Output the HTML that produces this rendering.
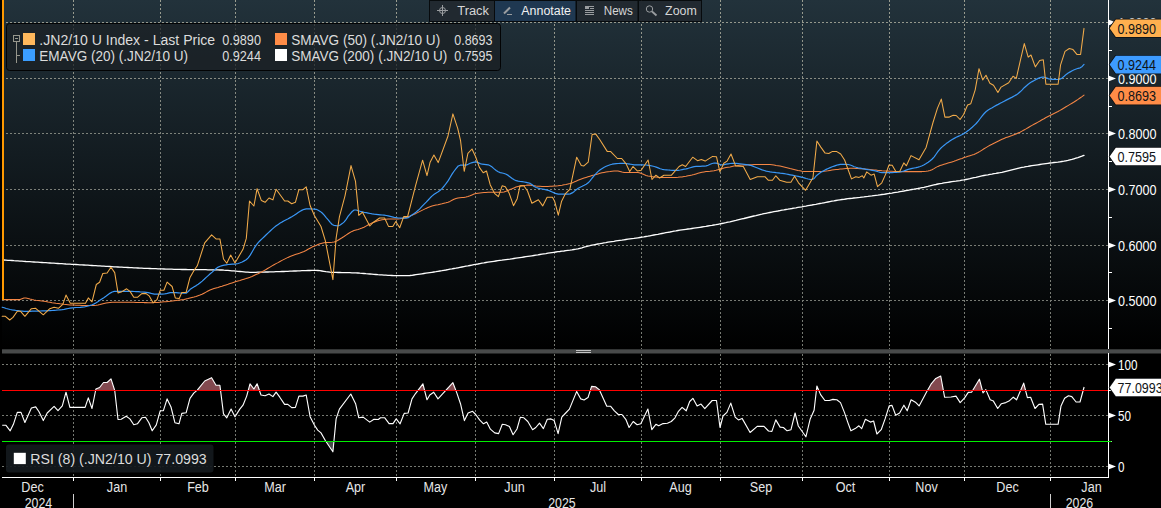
<!DOCTYPE html>
<html lang="en"><head><meta charset="utf-8"><title>.JN2/10 U Index chart</title>
<style>html,body{margin:0;padding:0;background:#000;overflow:hidden}svg{display:block}</style></head>
<body>
<svg width="1161" height="508" viewBox="0 0 1161 508" font-family="Liberation Sans, sans-serif" font-size="14">
<defs><linearGradient id="bg" x1="0" y1="0" x2="0" y2="1"><stop offset="0" stop-color="#22323b"/><stop offset="1" stop-color="#000000"/></linearGradient>
<clipPath id="cUp"><rect x="0" y="354" width="1108" height="36.5"/></clipPath>
<clipPath id="cDn"><rect x="0" y="441.5" width="1108" height="30"/></clipPath>
<linearGradient id="gg" gradientUnits="userSpaceOnUse" x1="0" y1="0" x2="0" y2="508"><stop offset="0" stop-color="#b8b8a6"/><stop offset="0.27" stop-color="#979a90"/><stop offset="1" stop-color="#93988f"/></linearGradient>
</defs>
<rect x="0" y="0" width="1161" height="508" fill="#000"/>
<rect x="2" y="0" width="1159" height="349" fill="url(#bg)"/>
<g stroke="url(#gg)" stroke-width="1" stroke-dasharray="2 2" shape-rendering="crispEdges" fill="none" opacity="0.8">
<path d="M2 22.5 H1108"/>
<path d="M2 78.5 H1108"/>
<path d="M2 133.5 H1108"/>
<path d="M2 189.5 H1108"/>
<path d="M2 245.5 H1108"/>
<path d="M2 300.5 H1108"/>
<path d="M2 364.5 H1108"/>
<path d="M2 415.5 H1108"/>
<path d="M2 466.5 H1108"/>
<path d="M73.5 0 V349"/>
<path d="M73.5 354 V477"/>
<path d="M160.5 0 V349"/>
<path d="M160.5 354 V477"/>
<path d="M235.5 0 V349"/>
<path d="M235.5 354 V477"/>
<path d="M314.5 0 V349"/>
<path d="M314.5 354 V477"/>
<path d="M396.5 0 V349"/>
<path d="M396.5 354 V477"/>
<path d="M475.5 0 V349"/>
<path d="M475.5 354 V477"/>
<path d="M554.5 0 V349"/>
<path d="M554.5 354 V477"/>
<path d="M641.5 0 V349"/>
<path d="M641.5 354 V477"/>
<path d="M720.5 0 V349"/>
<path d="M720.5 354 V477"/>
<path d="M802.5 0 V349"/>
<path d="M802.5 354 V477"/>
<path d="M889.5 0 V349"/>
<path d="M889.5 354 V477"/>
<path d="M964.5 0 V349"/>
<path d="M964.5 354 V477"/>
<path d="M1050.5 0 V349"/>
<path d="M1050.5 354 V477"/>
</g>
<rect x="2" y="349.3" width="1159" height="4.2" fill="#484a4a"/>
<rect x="576" y="350" width="15" height="1" fill="#c4c4c4"/><rect x="576" y="352" width="15" height="1" fill="#c4c4c4"/>
<g stroke="#ffffff" stroke-width="1" shape-rendering="crispEdges">
<path d="M1108.5 0 V349"/><path d="M1108.5 353 V478"/>
<path d="M2 477.5 H1109"/>
<path d="M73.5 478 V481"/>
<path d="M160.5 478 V481"/>
<path d="M235.5 478 V481"/>
<path d="M314.5 478 V481"/>
<path d="M396.5 478 V481"/>
<path d="M475.5 478 V481"/>
<path d="M554.5 478 V481"/>
<path d="M641.5 478 V481"/>
<path d="M720.5 478 V481"/>
<path d="M802.5 478 V481"/>
<path d="M889.5 478 V481"/>
<path d="M964.5 478 V481"/>
<path d="M1050.5 478 V481"/>
<path d="M73.5 494 V508" stroke="#cfcfcf"/><path d="M1050.5 494 V508" stroke="#cfcfcf"/>
<path d="M1109 50.5 H1112"/>
<path d="M1109 106.5 H1112"/>
<path d="M1109 161.5 H1112"/>
<path d="M1109 217.5 H1112"/>
<path d="M1109 272.5 H1112"/>
<path d="M1109 328.5 H1112"/>
<path d="M1109 390.5 H1112"/>
<path d="M1109 441.5 H1112"/>
</g>
<g fill="#ffffff">
<path d="M1109 19.7 L1116 22.5 L1109 25.3 Z"/>
<text x="1118" y="28.0" font-size="14" textLength="38.5" lengthAdjust="spacingAndGlyphs">1.0000</text>
<path d="M1109 75.7 L1116 78.5 L1109 81.3 Z"/>
<text x="1118" y="84.0" font-size="14" textLength="38.5" lengthAdjust="spacingAndGlyphs">0.9000</text>
<path d="M1109 130.7 L1116 133.5 L1109 136.3 Z"/>
<text x="1118" y="139.0" font-size="14" textLength="38.5" lengthAdjust="spacingAndGlyphs">0.8000</text>
<path d="M1109 186.7 L1116 189.5 L1109 192.3 Z"/>
<text x="1118" y="195.0" font-size="14" textLength="38.5" lengthAdjust="spacingAndGlyphs">0.7000</text>
<path d="M1109 242.7 L1116 245.5 L1109 248.3 Z"/>
<text x="1118" y="251.0" font-size="14" textLength="38.5" lengthAdjust="spacingAndGlyphs">0.6000</text>
<path d="M1109 297.7 L1116 300.5 L1109 303.3 Z"/>
<text x="1118" y="306.0" font-size="14" textLength="38.5" lengthAdjust="spacingAndGlyphs">0.5000</text>
<path d="M1109 361.7 L1116 364.5 L1109 367.3 Z"/>
<text x="1118" y="370.0" font-size="14" textLength="19.5" lengthAdjust="spacingAndGlyphs">100</text>
<path d="M1109 412.7 L1116 415.5 L1109 418.3 Z"/>
<text x="1118" y="421.0" font-size="14" textLength="13" lengthAdjust="spacingAndGlyphs">50</text>
<path d="M1109 463.7 L1116 466.5 L1109 469.3 Z"/>
<text x="1118" y="472.0" font-size="14" textLength="6.5" lengthAdjust="spacingAndGlyphs">0</text>
</g>
<g fill="none" stroke-linejoin="round" stroke-linecap="round">
<path d="M3.9 260.0 L5.9 260.1 L7.9 260.3 L9.9 260.4 L11.9 260.5 L13.9 260.7 L15.9 260.8 L17.9 260.9 L19.9 261.1 L21.9 261.2 L23.9 261.3 L25.9 261.5 L27.9 261.6 L29.9 261.7 L31.9 261.9 L33.9 262.0 L35.9 262.1 L37.9 262.2 L39.9 262.4 L41.9 262.5 L43.9 262.6 L45.9 262.7 L47.9 262.9 L49.9 263.0 L51.9 263.1 L53.9 263.2 L55.9 263.4 L57.9 263.5 L59.9 263.6 L61.9 263.7 L63.9 263.8 L65.9 264.0 L67.9 264.1 L69.9 264.2 L71.9 264.3 L73.9 264.4 L75.9 264.5 L77.9 264.6 L79.9 264.8 L81.9 264.9 L83.9 265.0 L85.9 265.1 L87.9 265.2 L89.9 265.4 L91.9 265.5 L93.9 265.6 L95.9 265.7 L97.9 265.8 L99.9 265.9 L101.9 266.1 L103.9 266.2 L105.9 266.3 L107.9 266.4 L109.9 266.5 L111.9 266.6 L113.9 266.8 L115.9 266.9 L117.9 267.0 L119.9 267.1 L121.9 267.2 L123.9 267.3 L125.9 267.4 L127.9 267.5 L129.9 267.6 L131.9 267.7 L133.9 267.8 L135.9 267.9 L137.9 268.0 L139.9 268.1 L141.9 268.2 L143.9 268.3 L145.9 268.4 L147.9 268.4 L149.9 268.5 L151.9 268.6 L153.9 268.7 L155.9 268.7 L157.9 268.8 L159.9 268.9 L161.9 268.9 L163.9 269.0 L165.9 269.1 L167.9 269.1 L169.9 269.2 L171.9 269.2 L173.9 269.3 L175.9 269.3 L177.9 269.4 L179.9 269.4 L181.9 269.5 L183.9 269.5 L185.9 269.5 L187.9 269.6 L189.9 269.6 L191.9 269.6 L193.9 269.6 L195.9 269.7 L197.9 269.7 L199.9 269.7 L201.9 269.7 L203.9 269.7 L205.9 269.7 L207.9 269.8 L209.9 269.8 L211.9 269.8 L213.9 269.8 L215.9 269.9 L217.9 269.9 L219.9 270.0 L221.9 270.0 L223.9 270.2 L225.9 270.3 L227.9 270.4 L229.9 270.6 L231.9 270.8 L233.9 270.9 L235.9 271.1 L237.9 271.3 L239.9 271.5 L241.9 271.7 L243.9 271.9 L245.9 272.1 L247.9 272.2 L249.9 272.3 L251.9 272.3 L253.9 272.3 L255.9 272.3 L257.9 272.2 L259.9 272.2 L261.9 272.1 L263.9 272.1 L265.9 272.0 L267.9 272.0 L269.9 271.9 L271.9 271.8 L273.9 271.8 L275.9 271.7 L277.9 271.7 L279.9 271.6 L281.9 271.5 L283.9 271.5 L285.9 271.4 L287.9 271.3 L289.9 271.2 L291.9 271.1 L293.9 271.0 L295.9 271.0 L297.9 270.9 L299.9 270.8 L301.9 270.7 L303.9 270.6 L305.9 270.6 L307.9 270.5 L309.9 270.5 L311.9 270.4 L313.9 270.4 L315.9 270.4 L317.9 270.5 L319.9 270.7 L321.9 271.0 L323.9 271.3 L325.9 271.6 L327.9 271.8 L329.9 272.1 L331.9 272.3 L333.9 272.3 L335.9 272.4 L337.9 272.5 L339.9 272.5 L341.9 272.6 L343.9 272.6 L345.9 272.6 L347.9 272.7 L349.9 272.7 L351.9 272.8 L353.9 272.8 L355.9 272.9 L357.9 273.0 L359.9 273.2 L361.9 273.3 L363.9 273.5 L365.9 273.7 L367.9 273.8 L369.9 274.0 L371.9 274.2 L373.9 274.4 L375.9 274.5 L377.9 274.7 L379.9 274.8 L381.9 274.9 L383.9 275.1 L385.9 275.2 L387.9 275.3 L389.9 275.4 L391.9 275.5 L393.9 275.6 L395.9 275.6 L397.9 275.6 L399.9 275.6 L401.9 275.6 L403.9 275.6 L405.9 275.6 L407.9 275.6 L409.9 275.5 L411.9 275.3 L413.9 275.0 L415.9 274.7 L417.9 274.4 L419.9 274.1 L421.9 273.8 L423.9 273.5 L425.9 273.2 L427.9 272.9 L429.9 272.6 L431.9 272.3 L433.9 272.0 L435.9 271.7 L437.9 271.3 L439.9 271.0 L441.9 270.7 L443.9 270.3 L445.9 270.0 L447.9 269.6 L449.9 269.2 L451.9 268.9 L453.9 268.5 L455.9 268.2 L457.9 267.8 L459.9 267.4 L461.9 267.0 L463.9 266.6 L465.9 266.2 L467.9 265.9 L469.9 265.5 L471.9 265.1 L473.9 264.7 L475.9 264.3 L477.9 264.0 L479.9 263.6 L481.9 263.2 L483.9 262.9 L485.9 262.5 L487.9 262.2 L489.9 261.9 L491.9 261.6 L493.9 261.3 L495.9 261.0 L497.9 260.7 L499.9 260.4 L501.9 260.2 L503.9 259.9 L505.9 259.6 L507.9 259.3 L509.9 259.1 L511.9 258.8 L513.9 258.5 L515.9 258.2 L517.9 257.9 L519.9 257.6 L521.9 257.3 L523.9 257.0 L525.9 256.7 L527.9 256.4 L529.9 256.1 L531.9 255.8 L533.9 255.5 L535.9 255.2 L537.9 254.9 L539.9 254.5 L541.9 254.2 L543.9 253.9 L545.9 253.6 L547.9 253.2 L549.9 252.9 L551.9 252.6 L553.9 252.3 L555.9 252.0 L557.9 251.7 L559.9 251.5 L561.9 251.2 L563.9 251.0 L565.9 250.7 L567.9 250.4 L569.9 250.2 L571.9 249.9 L573.9 249.5 L575.9 249.2 L577.9 248.8 L579.9 248.3 L581.9 247.8 L583.9 247.2 L585.9 246.7 L587.9 246.1 L589.9 245.7 L591.9 245.2 L593.9 244.8 L595.9 244.4 L597.9 244.0 L599.9 243.7 L601.9 243.3 L603.9 242.9 L605.9 242.6 L607.9 242.2 L609.9 241.9 L611.9 241.6 L613.9 241.3 L615.9 240.9 L617.9 240.6 L619.9 240.3 L621.9 240.1 L623.9 239.8 L625.9 239.5 L627.9 239.2 L629.9 238.9 L631.9 238.6 L633.9 238.4 L635.9 238.1 L637.9 237.8 L639.9 237.5 L641.9 237.2 L643.9 236.9 L645.9 236.5 L647.9 236.2 L649.9 235.8 L651.9 235.4 L653.9 235.0 L655.9 234.6 L657.9 234.3 L659.9 233.9 L661.9 233.5 L663.9 233.1 L665.9 232.7 L667.9 232.3 L669.9 232.0 L671.9 231.6 L673.9 231.2 L675.9 230.9 L677.9 230.5 L679.9 230.2 L681.9 229.9 L683.9 229.6 L685.9 229.3 L687.9 229.0 L689.9 228.8 L691.9 228.5 L693.9 228.2 L695.9 227.9 L697.9 227.6 L699.9 227.3 L701.9 227.0 L703.9 226.7 L705.9 226.4 L707.9 226.0 L709.9 225.7 L711.9 225.4 L713.9 225.0 L715.9 224.7 L717.9 224.3 L719.9 223.9 L721.9 223.5 L723.9 223.1 L725.9 222.7 L727.9 222.2 L729.9 221.8 L731.9 221.3 L733.9 220.8 L735.9 220.4 L737.9 219.9 L739.9 219.4 L741.9 218.9 L743.9 218.5 L745.9 218.0 L747.9 217.5 L749.9 217.0 L751.9 216.5 L753.9 216.0 L755.9 215.6 L757.9 215.1 L759.9 214.6 L761.9 214.2 L763.9 213.7 L765.9 213.3 L767.9 212.9 L769.9 212.5 L771.9 212.1 L773.9 211.7 L775.9 211.3 L777.9 211.0 L779.9 210.6 L781.9 210.2 L783.9 209.9 L785.9 209.5 L787.9 209.2 L789.9 208.8 L791.9 208.5 L793.9 208.1 L795.9 207.8 L797.9 207.4 L799.9 207.1 L801.9 206.8 L803.9 206.4 L805.9 206.1 L807.9 205.7 L809.9 205.3 L811.9 205.0 L813.9 204.6 L815.9 204.3 L817.9 203.9 L819.9 203.5 L821.9 203.2 L823.9 202.8 L825.9 202.4 L827.9 202.0 L829.9 201.6 L831.9 201.2 L833.9 200.9 L835.9 200.5 L837.9 200.1 L839.9 199.8 L841.9 199.5 L843.9 199.3 L845.9 199.0 L847.9 198.7 L849.9 198.5 L851.9 198.3 L853.9 198.0 L855.9 197.8 L857.9 197.6 L859.9 197.4 L861.9 197.1 L863.9 196.9 L865.9 196.6 L867.9 196.4 L869.9 196.1 L871.9 195.9 L873.9 195.6 L875.9 195.3 L877.9 195.1 L879.9 194.8 L881.9 194.5 L883.9 194.3 L885.9 194.0 L887.9 193.7 L889.9 193.4 L891.9 193.1 L893.9 192.7 L895.9 192.4 L897.9 192.1 L899.9 191.7 L901.9 191.3 L903.9 191.0 L905.9 190.6 L907.9 190.3 L909.9 189.9 L911.9 189.5 L913.9 189.2 L915.9 188.8 L917.9 188.5 L919.9 188.1 L921.9 187.7 L923.9 187.3 L925.9 186.8 L927.9 186.4 L929.9 185.9 L931.9 185.4 L933.9 184.9 L935.9 184.5 L937.9 184.0 L939.9 183.6 L941.9 183.3 L943.9 182.9 L945.9 182.6 L947.9 182.3 L949.9 182.0 L951.9 181.7 L953.9 181.4 L955.9 181.2 L957.9 180.9 L959.9 180.6 L961.9 180.2 L963.9 179.9 L965.9 179.5 L967.9 179.1 L969.9 178.7 L971.9 178.2 L973.9 177.7 L975.9 177.3 L977.9 176.8 L979.9 176.3 L981.9 175.9 L983.9 175.5 L985.9 175.1 L987.9 174.8 L989.9 174.4 L991.9 174.1 L993.9 173.7 L995.9 173.4 L997.9 173.0 L999.9 172.7 L1001.9 172.3 L1003.9 171.8 L1005.9 171.3 L1007.9 170.8 L1009.9 170.3 L1011.9 169.8 L1013.9 169.3 L1015.9 168.8 L1017.9 168.3 L1019.9 167.8 L1021.9 167.4 L1023.9 167.1 L1025.9 166.7 L1027.9 166.4 L1029.9 166.0 L1031.9 165.7 L1033.9 165.4 L1035.9 165.1 L1037.9 164.8 L1039.9 164.5 L1041.9 164.2 L1043.9 163.9 L1045.9 163.6 L1047.9 163.3 L1049.9 163.0 L1051.9 162.8 L1053.9 162.5 L1055.9 162.3 L1057.9 162.1 L1059.9 161.8 L1061.9 161.5 L1063.9 161.2 L1065.9 160.8 L1067.9 160.4 L1069.9 159.9 L1071.9 159.4 L1073.9 158.8 L1075.9 158.2 L1077.9 157.6 L1079.9 156.9 L1081.9 156.2 L1083.9 155.4 L1084.0 155.4" stroke="#ffffff" stroke-width="1.3"/>
<path d="M4.0 299.6 L6.0 299.6 L8.0 299.6 L10.0 299.6 L12.0 299.6 L14.0 299.6 L16.0 299.6 L18.0 299.6 L20.0 299.6 L22.0 298.8 L24.0 298.0 L26.0 298.0 L28.0 298.4 L30.0 299.0 L32.0 299.5 L34.0 299.9 L36.0 300.2 L38.0 300.4 L40.0 300.7 L42.0 301.0 L44.0 301.3 L46.0 301.6 L48.0 302.0 L50.0 302.3 L52.0 302.7 L54.0 303.0 L56.0 303.3 L58.0 303.5 L60.0 303.8 L62.0 304.0 L64.0 304.3 L66.0 304.5 L68.0 304.7 L70.0 304.9 L72.0 305.0 L74.0 305.1 L76.0 305.2 L78.0 305.2 L80.0 305.3 L82.0 305.4 L84.0 305.4 L86.0 305.4 L88.0 305.5 L90.0 305.5 L92.0 305.5 L94.0 305.5 L96.0 305.3 L98.0 305.0 L100.0 304.6 L102.0 304.1 L104.0 303.6 L106.0 303.1 L108.0 302.7 L110.0 302.4 L112.0 302.3 L114.0 302.3 L116.0 302.3 L118.0 302.3 L120.0 302.3 L122.0 302.3 L124.0 302.3 L126.0 302.3 L128.0 302.3 L130.0 302.3 L132.0 302.3 L134.0 302.3 L136.0 302.4 L138.0 302.4 L140.0 302.5 L142.0 302.5 L144.0 302.6 L146.0 302.6 L148.0 302.7 L150.0 302.7 L152.0 302.7 L154.0 302.6 L156.0 302.5 L158.0 302.4 L160.0 302.2 L162.0 302.0 L164.0 301.8 L166.0 301.7 L168.0 301.5 L170.0 301.3 L172.0 301.0 L174.0 300.8 L176.0 300.6 L178.0 300.3 L180.0 300.0 L182.0 299.7 L184.0 299.4 L186.0 299.0 L188.0 298.6 L190.0 298.1 L192.0 297.6 L194.0 297.1 L196.0 296.5 L198.0 295.8 L200.0 295.1 L202.0 294.3 L204.0 293.2 L206.0 292.1 L208.0 291.0 L210.0 290.0 L212.0 289.2 L214.0 288.5 L216.0 287.9 L218.0 287.4 L220.0 286.8 L222.0 286.3 L224.0 285.6 L226.0 284.9 L228.0 284.3 L230.0 283.6 L232.0 282.9 L234.0 282.2 L236.0 281.5 L238.0 280.9 L240.0 280.4 L242.0 279.8 L244.0 279.2 L246.0 278.6 L248.0 277.9 L250.0 277.2 L252.0 276.4 L254.0 275.5 L256.0 274.6 L258.0 273.7 L260.0 272.7 L262.0 271.7 L264.0 270.6 L266.0 269.5 L268.0 268.3 L270.0 267.1 L272.0 265.9 L274.0 264.7 L276.0 263.6 L278.0 262.6 L280.0 261.5 L282.0 260.4 L284.0 259.4 L286.0 258.4 L288.0 257.4 L290.0 256.5 L292.0 255.7 L294.0 255.0 L296.0 254.3 L298.0 253.7 L300.0 253.1 L302.0 252.3 L304.0 251.5 L306.0 250.5 L308.0 249.3 L310.0 248.2 L312.0 247.1 L314.0 246.2 L316.0 245.4 L318.0 244.6 L320.0 243.8 L322.0 243.2 L324.0 242.8 L326.0 242.6 L328.0 242.5 L330.0 242.4 L332.0 242.3 L334.0 242.1 L336.0 241.4 L338.0 240.2 L340.0 239.0 L342.0 237.8 L344.0 236.5 L346.0 235.1 L348.0 233.7 L350.0 232.5 L352.0 231.4 L354.0 230.5 L356.0 229.9 L358.0 229.4 L360.0 228.8 L362.0 228.1 L364.0 227.2 L366.0 226.1 L368.0 225.0 L370.0 224.0 L372.0 223.1 L374.0 222.2 L376.0 221.4 L378.0 220.8 L380.0 220.3 L382.0 219.8 L384.0 219.4 L386.0 219.2 L388.0 219.1 L390.0 219.0 L392.0 219.0 L394.0 219.0 L396.0 219.0 L398.0 218.9 L400.0 218.8 L402.0 218.5 L404.0 218.0 L406.0 217.4 L408.0 216.8 L410.0 216.1 L412.0 215.3 L414.0 214.3 L416.0 213.4 L418.0 212.4 L420.0 211.4 L422.0 210.4 L424.0 209.4 L426.0 208.4 L428.0 207.5 L430.0 206.8 L432.0 206.1 L434.0 205.6 L436.0 205.1 L438.0 204.7 L440.0 204.2 L442.0 203.8 L444.0 203.3 L446.0 202.8 L448.0 202.2 L450.0 201.4 L452.0 200.3 L454.0 199.3 L456.0 198.4 L458.0 197.9 L460.0 197.7 L462.0 197.5 L464.0 197.4 L466.0 197.1 L468.0 196.5 L470.0 195.8 L472.0 194.9 L474.0 194.1 L476.0 193.5 L478.0 193.2 L480.0 193.0 L482.0 192.8 L484.0 192.6 L486.0 192.4 L488.0 192.3 L490.0 192.3 L492.0 192.3 L494.0 192.3 L496.0 192.3 L498.0 192.3 L500.0 192.3 L502.0 192.3 L504.0 192.0 L506.0 191.3 L508.0 190.4 L510.0 189.6 L512.0 188.8 L514.0 187.9 L516.0 187.1 L518.0 186.4 L520.0 185.9 L522.0 185.6 L524.0 185.4 L526.0 185.3 L528.0 185.1 L530.0 185.1 L532.0 185.4 L534.0 185.7 L536.0 186.0 L538.0 186.2 L540.0 186.3 L542.0 186.5 L544.0 186.5 L546.0 186.5 L548.0 186.4 L550.0 186.3 L552.0 186.2 L554.0 186.0 L556.0 185.9 L558.0 185.7 L560.0 185.4 L562.0 185.2 L564.0 184.8 L566.0 184.5 L568.0 184.0 L570.0 183.6 L572.0 182.9 L574.0 182.1 L576.0 181.2 L578.0 180.3 L580.0 179.5 L582.0 178.7 L584.0 178.0 L586.0 177.4 L588.0 176.8 L590.0 176.2 L592.0 175.6 L594.0 175.1 L596.0 174.5 L598.0 173.9 L600.0 173.3 L602.0 172.8 L604.0 172.4 L606.0 172.0 L608.0 171.7 L610.0 171.5 L612.0 171.2 L614.0 171.0 L616.0 170.9 L618.0 170.9 L620.0 171.4 L622.0 172.1 L624.0 172.4 L626.0 172.4 L628.0 172.4 L630.0 172.4 L632.0 172.4 L634.0 172.4 L636.0 172.4 L638.0 172.5 L640.0 173.0 L642.0 173.7 L644.0 174.6 L646.0 175.4 L648.0 175.9 L650.0 176.2 L652.0 176.6 L654.0 176.9 L656.0 177.1 L658.0 177.3 L660.0 177.4 L662.0 177.4 L664.0 177.4 L666.0 177.4 L668.0 177.4 L670.0 177.4 L672.0 177.4 L674.0 177.4 L676.0 177.4 L678.0 177.3 L680.0 177.1 L682.0 176.9 L684.0 176.5 L686.0 176.2 L688.0 175.8 L690.0 175.4 L692.0 175.0 L694.0 174.5 L696.0 173.9 L698.0 173.3 L700.0 172.8 L702.0 172.3 L704.0 171.9 L706.0 171.6 L708.0 171.4 L710.0 171.3 L712.0 171.0 L714.0 170.7 L716.0 170.3 L718.0 169.8 L720.0 169.3 L722.0 168.7 L724.0 168.1 L726.0 167.6 L728.0 167.2 L730.0 166.9 L732.0 166.5 L734.0 166.1 L736.0 165.8 L738.0 165.5 L740.0 165.3 L742.0 165.1 L744.0 165.0 L746.0 164.9 L748.0 164.8 L750.0 164.7 L752.0 164.7 L754.0 164.6 L756.0 164.5 L758.0 164.5 L760.0 164.5 L762.0 164.4 L764.0 164.4 L766.0 164.4 L768.0 164.4 L770.0 164.5 L772.0 164.7 L774.0 165.0 L776.0 165.4 L778.0 165.7 L780.0 166.1 L782.0 166.5 L784.0 167.0 L786.0 167.5 L788.0 168.0 L790.0 168.5 L792.0 168.9 L794.0 169.4 L796.0 169.9 L798.0 170.4 L800.0 170.8 L802.0 171.2 L804.0 171.4 L806.0 171.5 L808.0 171.5 L810.0 171.5 L812.0 171.5 L814.0 171.5 L816.0 171.5 L818.0 171.5 L820.0 171.5 L822.0 171.5 L824.0 171.3 L826.0 171.1 L828.0 170.8 L830.0 170.4 L832.0 170.1 L834.0 169.8 L836.0 169.6 L838.0 169.4 L840.0 169.1 L842.0 168.9 L844.0 168.7 L846.0 168.5 L848.0 168.4 L850.0 168.3 L852.0 168.3 L854.0 168.3 L856.0 168.4 L858.0 168.5 L860.0 168.7 L862.0 168.8 L864.0 169.0 L866.0 169.2 L868.0 169.3 L870.0 169.5 L872.0 169.7 L874.0 169.9 L876.0 170.1 L878.0 170.4 L880.0 170.6 L882.0 170.8 L884.0 170.9 L886.0 171.0 L888.0 171.1 L890.0 171.2 L892.0 171.3 L894.0 171.4 L896.0 171.5 L898.0 171.6 L900.0 171.6 L902.0 171.6 L904.0 171.6 L906.0 171.6 L908.0 171.6 L910.0 171.6 L912.0 171.6 L914.0 171.6 L916.0 171.6 L918.0 171.6 L920.0 171.6 L922.0 171.6 L924.0 171.4 L926.0 171.2 L928.0 170.9 L930.0 170.5 L932.0 169.7 L934.0 168.6 L936.0 167.4 L938.0 166.4 L940.0 165.6 L942.0 164.9 L944.0 164.3 L946.0 163.7 L948.0 163.1 L950.0 162.5 L952.0 161.9 L954.0 161.3 L956.0 160.6 L958.0 159.8 L960.0 159.1 L962.0 158.4 L964.0 157.6 L966.0 157.0 L968.0 156.3 L970.0 155.7 L972.0 155.1 L974.0 154.4 L976.0 153.5 L978.0 152.5 L980.0 151.4 L982.0 150.1 L984.0 148.8 L986.0 147.6 L988.0 146.4 L990.0 145.3 L992.0 144.3 L994.0 143.2 L996.0 142.2 L998.0 141.2 L1000.0 140.2 L1002.0 139.3 L1004.0 138.4 L1006.0 137.6 L1008.0 136.9 L1010.0 136.2 L1012.0 135.5 L1014.0 134.7 L1016.0 134.0 L1018.0 133.1 L1020.0 132.2 L1022.0 131.1 L1024.0 130.0 L1026.0 128.9 L1028.0 127.7 L1030.0 126.5 L1032.0 125.4 L1034.0 124.3 L1036.0 123.2 L1038.0 122.1 L1040.0 121.0 L1042.0 119.8 L1044.0 118.7 L1046.0 117.5 L1048.0 116.5 L1050.0 115.5 L1052.0 114.5 L1054.0 113.5 L1056.0 112.5 L1058.0 111.5 L1060.0 110.4 L1062.0 109.2 L1064.0 108.0 L1066.0 106.8 L1068.0 105.6 L1070.0 104.4 L1072.0 103.2 L1074.0 102.0 L1076.0 100.7 L1078.0 99.4 L1080.0 98.0 L1082.0 96.6 L1084.0 95.1" stroke="#f58645" stroke-width="1.05"/>
<path d="M2.2 307.2 L4.2 307.8 L6.2 308.5 L8.2 309.0 L10.2 309.5 L12.2 309.9 L14.2 310.2 L16.2 310.5 L18.2 310.7 L20.2 311.0 L22.2 311.1 L24.2 311.3 L26.2 311.3 L28.2 311.3 L30.2 311.3 L32.2 311.2 L34.2 311.2 L36.2 311.1 L38.2 311.1 L40.2 311.0 L42.2 310.9 L44.2 310.9 L46.2 310.8 L48.2 310.7 L50.2 310.6 L52.2 310.5 L54.2 310.3 L56.2 310.2 L58.2 310.0 L60.2 309.8 L62.2 309.6 L64.2 309.3 L66.2 308.9 L68.2 308.5 L70.2 308.1 L72.2 307.8 L74.2 307.7 L76.2 307.5 L78.2 307.5 L80.2 307.4 L82.2 307.2 L84.2 307.0 L86.2 306.5 L88.2 306.0 L90.2 305.4 L92.2 304.7 L94.2 303.9 L96.2 302.8 L98.2 301.5 L100.2 300.1 L102.2 298.7 L104.2 297.4 L106.2 296.0 L108.2 294.5 L110.2 293.1 L112.2 292.0 L114.2 291.4 L116.2 291.4 L118.2 291.4 L120.2 291.4 L122.2 291.4 L124.2 291.4 L126.2 291.4 L128.2 291.4 L130.2 291.4 L132.2 291.4 L134.2 291.5 L136.2 291.6 L138.2 291.7 L140.2 291.9 L142.2 292.0 L144.2 292.2 L146.2 292.4 L148.2 292.7 L150.2 293.1 L152.2 293.7 L154.2 294.1 L156.2 294.2 L158.2 294.2 L160.2 294.1 L162.2 294.1 L164.2 294.0 L166.2 293.7 L168.2 293.1 L170.2 292.6 L172.2 292.5 L174.2 292.6 L176.2 292.7 L178.2 292.8 L180.2 293.0 L182.2 293.1 L184.2 293.2 L186.2 293.2 L188.2 291.5 L190.2 289.3 L192.2 288.0 L194.2 286.7 L196.2 285.6 L198.2 284.3 L200.2 282.7 L202.2 281.1 L204.2 279.3 L206.2 277.4 L208.2 275.6 L210.2 273.8 L212.2 272.1 L214.2 270.3 L216.2 268.5 L218.2 267.1 L220.2 266.3 L222.2 265.6 L224.2 265.2 L226.2 264.8 L228.2 264.5 L230.2 264.3 L232.2 264.2 L234.2 264.1 L236.2 263.9 L238.2 263.5 L240.2 262.8 L242.2 262.0 L244.2 260.9 L246.2 259.8 L248.2 257.9 L250.2 255.1 L252.2 251.7 L254.2 248.2 L256.2 245.1 L258.2 242.6 L260.2 240.5 L262.2 238.6 L264.2 236.7 L266.2 234.8 L268.2 232.9 L270.2 231.0 L272.2 229.1 L274.2 227.4 L276.2 225.8 L278.2 224.4 L280.2 223.1 L282.2 221.9 L284.2 220.8 L286.2 219.7 L288.2 218.7 L290.2 217.6 L292.2 216.5 L294.2 215.3 L296.2 213.9 L298.2 212.5 L300.2 211.2 L302.2 210.1 L304.2 209.3 L306.2 208.8 L308.2 208.8 L310.2 208.9 L312.2 209.0 L314.2 209.1 L316.2 209.3 L318.2 210.2 L320.2 211.4 L322.2 213.0 L324.2 215.1 L326.2 217.6 L328.2 219.8 L330.2 222.3 L332.2 224.5 L334.2 225.5 L336.2 225.7 L338.2 225.8 L340.2 225.0 L342.2 223.6 L344.2 221.9 L346.2 219.3 L348.2 216.2 L350.2 213.8 L352.2 211.5 L354.2 210.0 L356.2 210.0 L358.2 210.7 L360.2 211.3 L362.2 211.8 L364.2 212.3 L366.2 212.7 L368.2 213.1 L370.2 213.5 L372.2 213.9 L374.2 214.2 L376.2 214.4 L378.2 214.6 L380.2 214.8 L382.2 215.0 L384.2 215.2 L386.2 215.5 L388.2 215.8 L390.2 216.3 L392.2 216.8 L394.2 217.3 L396.2 217.7 L398.2 218.0 L400.2 218.0 L402.2 218.1 L404.2 218.1 L406.2 218.1 L408.2 217.7 L410.2 216.3 L412.2 214.8 L414.2 213.5 L416.2 212.0 L418.2 210.3 L420.2 208.3 L422.2 206.2 L424.2 204.1 L426.2 202.1 L428.2 200.0 L430.2 197.8 L432.2 195.9 L434.2 194.2 L436.2 192.9 L438.2 191.7 L440.2 190.3 L442.2 188.4 L444.2 186.0 L446.2 183.4 L448.2 180.6 L450.2 177.3 L452.2 173.9 L454.2 171.0 L456.2 168.4 L458.2 166.0 L460.2 165.2 L462.2 165.2 L464.2 165.2 L466.2 165.1 L468.2 164.2 L470.2 163.2 L472.2 162.6 L474.2 162.1 L476.2 161.9 L478.2 162.6 L480.2 163.6 L482.2 164.2 L484.2 164.4 L486.2 164.6 L488.2 164.8 L490.2 165.7 L492.2 167.1 L494.2 168.9 L496.2 170.5 L498.2 171.8 L500.2 172.6 L502.2 173.0 L504.2 173.5 L506.2 174.3 L508.2 175.4 L510.2 176.9 L512.2 178.4 L514.2 179.7 L516.2 180.7 L518.2 181.2 L520.2 181.5 L522.2 181.7 L524.2 182.0 L526.2 182.4 L528.2 182.8 L530.2 183.4 L532.2 184.8 L534.2 186.5 L536.2 187.5 L538.2 188.1 L540.2 188.6 L542.2 189.0 L544.2 189.4 L546.2 189.8 L548.2 190.3 L550.2 191.1 L552.2 192.0 L554.2 192.9 L556.2 193.7 L558.2 194.2 L560.2 194.2 L562.2 194.2 L564.2 194.2 L566.2 194.2 L568.2 194.2 L570.2 193.9 L572.2 192.9 L574.2 191.4 L576.2 189.8 L578.2 188.3 L580.2 187.2 L582.2 186.3 L584.2 185.3 L586.2 184.2 L588.2 182.8 L590.2 180.7 L592.2 178.0 L594.2 175.6 L596.2 173.4 L598.2 171.4 L600.2 169.7 L602.2 168.4 L604.2 167.2 L606.2 166.3 L608.2 165.5 L610.2 164.8 L612.2 164.2 L614.2 163.8 L616.2 163.6 L618.2 163.5 L620.2 163.4 L622.2 163.3 L624.2 163.3 L626.2 163.5 L628.2 163.8 L630.2 164.2 L632.2 164.5 L634.2 164.8 L636.2 164.8 L638.2 164.9 L640.2 164.9 L642.2 164.9 L644.2 165.0 L646.2 165.0 L648.2 165.3 L650.2 165.6 L652.2 166.0 L654.2 166.5 L656.2 167.1 L658.2 167.9 L660.2 168.7 L662.2 169.3 L664.2 169.6 L666.2 169.8 L668.2 170.0 L670.2 170.2 L672.2 170.3 L674.2 170.4 L676.2 170.4 L678.2 170.3 L680.2 170.0 L682.2 169.6 L684.2 169.2 L686.2 168.8 L688.2 168.3 L690.2 167.7 L692.2 167.1 L694.2 166.6 L696.2 166.4 L698.2 166.4 L700.2 166.3 L702.2 166.2 L704.2 166.2 L706.2 165.9 L708.2 165.2 L710.2 164.3 L712.2 163.5 L714.2 163.0 L716.2 163.1 L718.2 163.8 L720.2 164.6 L722.2 164.8 L724.2 164.6 L726.2 164.2 L728.2 163.8 L730.2 163.5 L732.2 163.3 L734.2 163.3 L736.2 163.4 L738.2 163.6 L740.2 163.8 L742.2 164.0 L744.2 164.3 L746.2 164.6 L748.2 164.9 L750.2 165.3 L752.2 165.9 L754.2 166.7 L756.2 167.5 L758.2 168.3 L760.2 169.1 L762.2 169.9 L764.2 170.5 L766.2 171.1 L768.2 171.5 L770.2 171.9 L772.2 172.2 L774.2 172.4 L776.2 172.7 L778.2 172.9 L780.2 173.2 L782.2 173.4 L784.2 173.7 L786.2 174.0 L788.2 174.4 L790.2 174.8 L792.2 175.2 L794.2 175.6 L796.2 176.0 L798.2 176.4 L800.2 176.8 L802.2 177.3 L804.2 177.9 L806.2 178.5 L808.2 179.0 L810.2 179.3 L812.2 179.5 L814.2 178.5 L816.2 175.9 L818.2 174.2 L820.2 172.8 L822.2 171.6 L824.2 170.5 L826.2 169.4 L828.2 168.5 L830.2 167.6 L832.2 166.8 L834.2 166.1 L836.2 165.4 L838.2 164.8 L840.2 164.4 L842.2 164.4 L844.2 164.4 L846.2 164.4 L848.2 164.5 L850.2 165.0 L852.2 165.8 L854.2 166.7 L856.2 167.3 L858.2 167.8 L860.2 168.2 L862.2 168.6 L864.2 168.9 L866.2 169.3 L868.2 169.7 L870.2 170.0 L872.2 170.3 L874.2 170.7 L876.2 171.1 L878.2 171.8 L880.2 172.4 L882.2 172.6 L884.2 172.6 L886.2 172.6 L888.2 172.6 L890.2 172.6 L892.2 172.6 L894.2 172.5 L896.2 172.3 L898.2 172.1 L900.2 171.8 L902.2 171.5 L904.2 170.9 L906.2 170.1 L908.2 169.4 L910.2 168.9 L912.2 168.4 L914.2 168.0 L916.2 167.6 L918.2 167.1 L920.2 166.5 L922.2 165.8 L924.2 164.8 L926.2 163.6 L928.2 162.2 L930.2 160.7 L932.2 159.0 L934.2 156.8 L936.2 154.0 L938.2 151.2 L940.2 148.8 L942.2 146.9 L944.2 145.2 L946.2 143.6 L948.2 142.2 L950.2 140.8 L952.2 139.5 L954.2 138.4 L956.2 137.3 L958.2 136.4 L960.2 135.5 L962.2 134.5 L964.2 133.4 L966.2 132.1 L968.2 130.6 L970.2 129.0 L972.2 127.3 L974.2 125.4 L976.2 123.5 L978.2 121.1 L980.2 118.5 L982.2 115.9 L984.2 113.5 L986.2 111.5 L988.2 110.0 L990.2 108.8 L992.2 107.7 L994.2 106.5 L996.2 105.4 L998.2 104.4 L1000.2 103.3 L1002.2 102.3 L1004.2 101.2 L1006.2 100.1 L1008.2 99.1 L1010.2 98.1 L1012.2 97.1 L1014.2 96.0 L1016.2 94.9 L1018.2 93.5 L1020.2 91.8 L1022.2 89.8 L1024.2 87.7 L1026.2 86.0 L1028.2 84.3 L1030.2 82.8 L1032.2 81.6 L1034.2 80.5 L1036.2 79.4 L1038.2 78.4 L1040.2 77.6 L1042.2 77.2 L1044.2 77.2 L1046.2 77.8 L1048.2 78.6 L1050.2 79.2 L1052.2 79.4 L1054.2 79.4 L1056.2 79.5 L1058.2 79.5 L1060.2 79.1 L1062.2 77.9 L1064.2 76.2 L1066.2 74.4 L1068.2 73.0 L1070.2 71.9 L1072.2 70.8 L1074.2 69.8 L1076.2 69.0 L1078.2 68.3 L1080.2 67.8 L1082.2 66.4 L1084.0 64.4" stroke="#3a97f6" stroke-width="1.2"/>
<path d="M2.2 316.3 L5.4 316.3 L9.7 320.0 L13.0 317.4 L17.3 311.3 L20.6 311.3 L24.9 316.3 L31.4 308.7 L35.7 308.3 L43.3 314.8 L49.8 308.7 L54.1 307.2 L58.4 308.3 L62.8 304.4 L66.0 295.1 L70.3 303.3 L85.5 303.3 L88.3 297.9 L92.0 301.8 L96.3 284.5 L99.6 282.3 L102.8 273.5 L107.1 273.0 L111.0 267.2 L114.7 272.6 L118.0 292.9 L121.2 292.1 L126.6 288.8 L130.0 291.4 L133.8 297.3 L137.4 297.3 L141.8 293.6 L146.1 293.6 L149.4 296.2 L153.2 302.9 L157.0 299.7 L160.2 290.3 L163.9 290.3 L167.1 282.1 L172.1 286.5 L175.3 297.9 L179.2 298.6 L181.8 292.5 L186.1 292.5 L190.0 277.4 L193.7 270.9 L197.3 265.8 L204.7 242.8 L211.6 234.8 L216.0 238.9 L219.9 238.9 L223.5 259.0 L226.8 263.3 L230.7 255.1 L235.0 262.9 L239.8 254.7 L243.0 249.3 L246.3 238.4 L249.5 201.0 L253.9 206.0 L257.1 188.7 L261.4 200.6 L265.1 202.3 L269.0 198.0 L272.9 199.9 L276.1 189.3 L284.6 201.0 L287.8 201.0 L291.7 203.8 L295.4 202.3 L298.9 189.7 L303.0 189.7 L306.2 186.9 L310.1 205.5 L314.5 215.7 L321.0 226.5 L325.3 240.6 L332.9 279.6 L336.1 238.4 L339.4 216.8 L345.0 195.8 L351.0 165.6 L355.5 181.4 L358.8 215.4 L362.5 212.2 L369.8 226.0 L373.1 222.5 L379.6 218.0 L384.6 218.0 L388.5 226.4 L392.8 226.4 L395.8 221.5 L399.7 227.8 L403.7 216.6 L407.6 216.6 L410.9 203.8 L415.5 185.8 L422.6 160.2 L427.0 175.6 L430.0 162.6 L433.9 155.0 L438.2 162.6 L448.0 136.0 L452.9 113.9 L457.7 128.4 L460.5 140.3 L464.2 171.3 L467.9 153.3 L472.0 149.0 L475.5 156.5 L479.4 167.4 L483.2 172.8 L486.5 171.0 L490.2 184.7 L494.5 193.3 L498.4 196.6 L502.1 185.8 L505.3 186.8 L509.2 193.3 L513.5 205.7 L517.2 198.7 L520.0 185.8 L524.0 186.0 L527.5 191.0 L531.9 203.3 L538.4 199.7 L542.7 205.9 L547.1 197.3 L552.5 197.3 L554.6 201.2 L558.3 215.2 L561.6 201.2 L565.5 193.6 L569.8 189.3 L576.7 157.2 L581.3 165.5 L583.9 165.9 L588.2 162.2 L592.1 134.5 L595.8 134.1 L599.7 139.5 L607.2 151.4 L610.5 151.4 L617.4 158.5 L621.7 158.5 L626.1 163.9 L629.7 171.5 L633.0 166.5 L637.3 170.9 L641.2 170.2 L648.1 160.0 L652.0 179.5 L655.9 175.2 L659.6 178.0 L663.9 175.2 L671.5 175.2 L679.1 166.5 L682.3 164.8 L685.6 166.5 L692.7 157.2 L697.5 160.7 L701.4 159.6 L705.1 161.1 L712.6 156.4 L716.5 156.8 L719.9 171.9 L723.8 163.3 L727.1 161.1 L731.0 154.0 L735.7 166.1 L743.3 166.5 L750.2 179.5 L757.4 176.7 L764.9 176.7 L768.2 180.2 L772.5 180.2 L775.8 175.8 L779.7 180.2 L786.6 182.3 L790.9 182.3 L794.6 176.3 L798.5 182.8 L805.6 190.3 L809.3 183.9 L813.0 177.4 L816.9 141.0 L820.8 147.1 L825.1 153.1 L828.8 153.5 L832.5 151.4 L836.4 151.4 L840.7 154.0 L844.6 160.0 L847.8 168.7 L851.5 178.9 L855.8 176.7 L859.1 177.4 L862.3 175.8 L863.8 178.0 L866.7 171.9 L871.0 175.2 L874.2 174.1 L877.5 186.7 L881.8 182.8 L885.7 174.1 L889.0 165.0 L892.2 165.3 L895.7 171.2 L899.7 171.5 L903.8 162.9 L906.4 165.8 L911.0 155.6 L919.0 159.7 L926.1 147.4 L933.0 122.5 L937.4 108.4 L941.3 99.1 L944.9 117.1 L949.3 117.1 L953.2 115.3 L956.2 115.5 L960.1 119.5 L963.6 114.5 L967.6 105.0 L970.8 103.7 L975.2 89.8 L979.0 68.7 L982.7 79.9 L986.0 75.2 L989.9 83.2 L993.5 85.3 L997.9 92.5 L1001.1 87.1 L1008.7 82.7 L1013.0 76.3 L1016.3 78.4 L1020.6 59.4 L1024.3 43.6 L1028.2 57.2 L1031.0 55.0 L1035.3 66.9 L1039.7 60.5 L1043.3 59.8 L1045.9 84.3 L1058.1 84.3 L1060.6 64.8 L1065.0 51.4 L1069.3 48.5 L1073.0 49.6 L1076.9 54.4 L1080.6 54.4 L1084.0 28.4" stroke="#f2ab4a" stroke-width="1.05"/>
</g>
<rect x="2" y="0" width="2" height="300" fill="#ff9900"/>
<path d="M2.2 425.3 L6.0 425.3 L10.2 430.8 L13.4 424.3 L17.3 412.4 L21.0 412.4 L24.9 422.5 L31.4 408.0 L35.7 406.9 L39.0 411.7 L43.3 420.6 L47.2 413.0 L54.1 406.3 L58.0 410.6 L62.3 405.9 L66.0 392.2 L69.9 407.4 L85.1 407.4 L88.3 397.9 L92.0 408.5 L95.9 389.0 L99.6 387.5 L103.5 382.5 L107.1 382.5 L111.0 378.8 L114.7 390.3 L118.0 419.5 L121.2 419.3 L126.2 416.3 L129.9 418.9 L133.8 424.7 L137.4 423.8 L141.8 417.8 L145.5 417.3 L148.9 422.7 L152.2 430.8 L156.3 424.9 L160.2 410.8 L163.4 410.6 L167.1 398.9 L171.0 407.0 L174.9 422.7 L179.0 423.8 L181.8 413.4 L186.1 412.8 L190.0 398.3 L193.8 393.2 L197.3 390.1 L204.7 381.0 L211.6 377.7 L216.0 385.3 L219.9 385.3 L223.5 413.9 L226.8 417.8 L231.1 409.1 L235.0 416.7 L239.8 409.1 L243.0 405.2 L246.7 396.1 L250.0 383.8 L253.9 389.0 L257.1 383.8 L261.0 395.0 L265.1 395.7 L269.0 394.0 L272.9 396.6 L276.1 392.2 L279.8 397.2 L284.6 404.4 L287.8 404.4 L291.7 407.6 L295.4 407.4 L298.9 396.1 L303.0 396.1 L306.2 395.0 L310.1 416.7 L314.5 425.3 L317.7 430.1 L321.0 432.9 L325.3 440.5 L332.9 451.8 L336.1 418.9 L339.4 409.1 L350.8 394.0 L355.6 403.7 L358.8 417.8 L363.2 417.1 L369.7 422.1 L374.0 419.3 L378.3 419.5 L380.5 417.8 L384.8 417.8 L389.1 423.6 L393.0 423.6 L396.2 418.9 L400.1 423.8 L404.2 413.4 L408.1 413.0 L412.0 398.9 L415.7 393.3 L422.9 383.8 L427.0 399.8 L429.8 395.0 L433.7 392.2 L438.0 398.9 L452.9 382.7 L456.8 392.9 L460.5 403.7 L464.4 420.6 L468.1 413.0 L472.6 411.3 L475.7 414.5 L479.6 419.9 L483.5 423.8 L486.7 422.1 L490.4 429.2 L494.7 432.9 L498.6 433.6 L502.3 424.3 L505.5 424.7 L509.4 426.4 L513.1 434.7 L517.0 429.0 L520.3 417.3 L523.9 417.8 L527.8 421.5 L532.6 429.7 L535.8 427.5 L539.5 423.2 L543.4 428.6 L547.3 419.3 L551.0 418.9 L554.2 420.6 L558.1 433.6 L561.8 417.1 L565.7 413.0 L569.4 409.1 L576.7 391.4 L580.8 398.9 L584.1 400.0 L588.0 397.6 L591.6 386.4 L595.5 386.8 L599.2 389.6 L606.8 406.3 L610.7 406.3 L614.4 410.8 L618.3 414.5 L621.9 414.5 L625.8 419.3 L629.1 427.5 L633.2 421.5 L637.1 424.7 L640.8 423.8 L647.9 409.1 L651.8 429.7 L655.9 424.3 L658.7 425.8 L663.1 423.6 L667.4 423.2 L671.3 421.5 L675.0 417.8 L678.2 411.7 L682.1 407.4 L686.2 410.8 L689.7 401.5 L692.9 398.3 L697.1 405.9 L701.0 404.1 L704.8 408.7 L712.2 400.5 L716.5 400.5 L720.0 427.5 L723.0 416.0 L726.9 412.4 L730.8 403.1 L735.2 417.1 L738.4 419.9 L742.1 418.4 L750.1 432.5 L757.2 426.4 L764.0 426.4 L768.5 431.0 L771.9 431.4 L775.8 419.9 L780.1 427.1 L783.4 427.5 L787.1 430.8 L791.0 429.7 L795.1 413.0 L798.3 426.0 L805.9 436.8 L810.2 418.9 L814.1 410.2 L816.9 386.0 L820.6 394.6 L824.9 400.5 L829.3 400.5 L832.9 399.4 L836.8 399.8 L840.5 402.6 L844.4 412.4 L847.7 422.1 L850.9 430.8 L855.2 428.6 L858.9 425.8 L861.7 428.6 L865.4 419.3 L870.4 422.1 L873.6 421.0 L876.9 434.0 L881.2 429.7 L885.1 418.9 L889.2 405.9 L892.0 405.4 L895.7 415.2 L899.6 413.0 L903.9 405.2 L907.2 410.8 L911.1 399.8 L915.4 402.2 L919.1 405.9 L926.7 391.8 L931.0 384.2 L935.8 378.4 L940.7 376.0 L944.6 397.2 L951.0 397.0 L956.0 396.1 L960.2 402.6 L964.6 397.9 L968.3 392.4 L971.6 392.2 L979.4 379.2 L983.0 392.9 L985.8 389.6 L990.2 399.8 L993.4 401.1 L997.7 408.5 L1001.4 403.7 L1005.8 402.6 L1009.0 401.1 L1013.3 397.2 L1016.6 399.8 L1023.7 383.1 L1027.4 397.6 L1030.6 397.2 L1035.0 408.5 L1038.9 404.4 L1042.6 404.1 L1045.8 424.3 L1058.1 424.3 L1061.0 405.9 L1064.6 398.3 L1068.5 395.7 L1071.8 396.6 L1076.1 402.0 L1080.0 402.0 L1084.1 387.0 L1084.1 390.5 L2.2 390.5 Z" fill="#82494f" clip-path="url(#cUp)"/>
<path d="M2.2 425.3 L6.0 425.3 L10.2 430.8 L13.4 424.3 L17.3 412.4 L21.0 412.4 L24.9 422.5 L31.4 408.0 L35.7 406.9 L39.0 411.7 L43.3 420.6 L47.2 413.0 L54.1 406.3 L58.0 410.6 L62.3 405.9 L66.0 392.2 L69.9 407.4 L85.1 407.4 L88.3 397.9 L92.0 408.5 L95.9 389.0 L99.6 387.5 L103.5 382.5 L107.1 382.5 L111.0 378.8 L114.7 390.3 L118.0 419.5 L121.2 419.3 L126.2 416.3 L129.9 418.9 L133.8 424.7 L137.4 423.8 L141.8 417.8 L145.5 417.3 L148.9 422.7 L152.2 430.8 L156.3 424.9 L160.2 410.8 L163.4 410.6 L167.1 398.9 L171.0 407.0 L174.9 422.7 L179.0 423.8 L181.8 413.4 L186.1 412.8 L190.0 398.3 L193.8 393.2 L197.3 390.1 L204.7 381.0 L211.6 377.7 L216.0 385.3 L219.9 385.3 L223.5 413.9 L226.8 417.8 L231.1 409.1 L235.0 416.7 L239.8 409.1 L243.0 405.2 L246.7 396.1 L250.0 383.8 L253.9 389.0 L257.1 383.8 L261.0 395.0 L265.1 395.7 L269.0 394.0 L272.9 396.6 L276.1 392.2 L279.8 397.2 L284.6 404.4 L287.8 404.4 L291.7 407.6 L295.4 407.4 L298.9 396.1 L303.0 396.1 L306.2 395.0 L310.1 416.7 L314.5 425.3 L317.7 430.1 L321.0 432.9 L325.3 440.5 L332.9 451.8 L336.1 418.9 L339.4 409.1 L350.8 394.0 L355.6 403.7 L358.8 417.8 L363.2 417.1 L369.7 422.1 L374.0 419.3 L378.3 419.5 L380.5 417.8 L384.8 417.8 L389.1 423.6 L393.0 423.6 L396.2 418.9 L400.1 423.8 L404.2 413.4 L408.1 413.0 L412.0 398.9 L415.7 393.3 L422.9 383.8 L427.0 399.8 L429.8 395.0 L433.7 392.2 L438.0 398.9 L452.9 382.7 L456.8 392.9 L460.5 403.7 L464.4 420.6 L468.1 413.0 L472.6 411.3 L475.7 414.5 L479.6 419.9 L483.5 423.8 L486.7 422.1 L490.4 429.2 L494.7 432.9 L498.6 433.6 L502.3 424.3 L505.5 424.7 L509.4 426.4 L513.1 434.7 L517.0 429.0 L520.3 417.3 L523.9 417.8 L527.8 421.5 L532.6 429.7 L535.8 427.5 L539.5 423.2 L543.4 428.6 L547.3 419.3 L551.0 418.9 L554.2 420.6 L558.1 433.6 L561.8 417.1 L565.7 413.0 L569.4 409.1 L576.7 391.4 L580.8 398.9 L584.1 400.0 L588.0 397.6 L591.6 386.4 L595.5 386.8 L599.2 389.6 L606.8 406.3 L610.7 406.3 L614.4 410.8 L618.3 414.5 L621.9 414.5 L625.8 419.3 L629.1 427.5 L633.2 421.5 L637.1 424.7 L640.8 423.8 L647.9 409.1 L651.8 429.7 L655.9 424.3 L658.7 425.8 L663.1 423.6 L667.4 423.2 L671.3 421.5 L675.0 417.8 L678.2 411.7 L682.1 407.4 L686.2 410.8 L689.7 401.5 L692.9 398.3 L697.1 405.9 L701.0 404.1 L704.8 408.7 L712.2 400.5 L716.5 400.5 L720.0 427.5 L723.0 416.0 L726.9 412.4 L730.8 403.1 L735.2 417.1 L738.4 419.9 L742.1 418.4 L750.1 432.5 L757.2 426.4 L764.0 426.4 L768.5 431.0 L771.9 431.4 L775.8 419.9 L780.1 427.1 L783.4 427.5 L787.1 430.8 L791.0 429.7 L795.1 413.0 L798.3 426.0 L805.9 436.8 L810.2 418.9 L814.1 410.2 L816.9 386.0 L820.6 394.6 L824.9 400.5 L829.3 400.5 L832.9 399.4 L836.8 399.8 L840.5 402.6 L844.4 412.4 L847.7 422.1 L850.9 430.8 L855.2 428.6 L858.9 425.8 L861.7 428.6 L865.4 419.3 L870.4 422.1 L873.6 421.0 L876.9 434.0 L881.2 429.7 L885.1 418.9 L889.2 405.9 L892.0 405.4 L895.7 415.2 L899.6 413.0 L903.9 405.2 L907.2 410.8 L911.1 399.8 L915.4 402.2 L919.1 405.9 L926.7 391.8 L931.0 384.2 L935.8 378.4 L940.7 376.0 L944.6 397.2 L951.0 397.0 L956.0 396.1 L960.2 402.6 L964.6 397.9 L968.3 392.4 L971.6 392.2 L979.4 379.2 L983.0 392.9 L985.8 389.6 L990.2 399.8 L993.4 401.1 L997.7 408.5 L1001.4 403.7 L1005.8 402.6 L1009.0 401.1 L1013.3 397.2 L1016.6 399.8 L1023.7 383.1 L1027.4 397.6 L1030.6 397.2 L1035.0 408.5 L1038.9 404.4 L1042.6 404.1 L1045.8 424.3 L1058.1 424.3 L1061.0 405.9 L1064.6 398.3 L1068.5 395.7 L1071.8 396.6 L1076.1 402.0 L1080.0 402.0 L1084.1 387.0 L1084.1 441.5 L2.2 441.5 Z" fill="#4a4a4c" clip-path="url(#cDn)"/>
<path d="M2.2 425.3 L6.0 425.3 L10.2 430.8 L13.4 424.3 L17.3 412.4 L21.0 412.4 L24.9 422.5 L31.4 408.0 L35.7 406.9 L39.0 411.7 L43.3 420.6 L47.2 413.0 L54.1 406.3 L58.0 410.6 L62.3 405.9 L66.0 392.2 L69.9 407.4 L85.1 407.4 L88.3 397.9 L92.0 408.5 L95.9 389.0 L99.6 387.5 L103.5 382.5 L107.1 382.5 L111.0 378.8 L114.7 390.3 L118.0 419.5 L121.2 419.3 L126.2 416.3 L129.9 418.9 L133.8 424.7 L137.4 423.8 L141.8 417.8 L145.5 417.3 L148.9 422.7 L152.2 430.8 L156.3 424.9 L160.2 410.8 L163.4 410.6 L167.1 398.9 L171.0 407.0 L174.9 422.7 L179.0 423.8 L181.8 413.4 L186.1 412.8 L190.0 398.3 L193.8 393.2 L197.3 390.1 L204.7 381.0 L211.6 377.7 L216.0 385.3 L219.9 385.3 L223.5 413.9 L226.8 417.8 L231.1 409.1 L235.0 416.7 L239.8 409.1 L243.0 405.2 L246.7 396.1 L250.0 383.8 L253.9 389.0 L257.1 383.8 L261.0 395.0 L265.1 395.7 L269.0 394.0 L272.9 396.6 L276.1 392.2 L279.8 397.2 L284.6 404.4 L287.8 404.4 L291.7 407.6 L295.4 407.4 L298.9 396.1 L303.0 396.1 L306.2 395.0 L310.1 416.7 L314.5 425.3 L317.7 430.1 L321.0 432.9 L325.3 440.5 L332.9 451.8 L336.1 418.9 L339.4 409.1 L350.8 394.0 L355.6 403.7 L358.8 417.8 L363.2 417.1 L369.7 422.1 L374.0 419.3 L378.3 419.5 L380.5 417.8 L384.8 417.8 L389.1 423.6 L393.0 423.6 L396.2 418.9 L400.1 423.8 L404.2 413.4 L408.1 413.0 L412.0 398.9 L415.7 393.3 L422.9 383.8 L427.0 399.8 L429.8 395.0 L433.7 392.2 L438.0 398.9 L452.9 382.7 L456.8 392.9 L460.5 403.7 L464.4 420.6 L468.1 413.0 L472.6 411.3 L475.7 414.5 L479.6 419.9 L483.5 423.8 L486.7 422.1 L490.4 429.2 L494.7 432.9 L498.6 433.6 L502.3 424.3 L505.5 424.7 L509.4 426.4 L513.1 434.7 L517.0 429.0 L520.3 417.3 L523.9 417.8 L527.8 421.5 L532.6 429.7 L535.8 427.5 L539.5 423.2 L543.4 428.6 L547.3 419.3 L551.0 418.9 L554.2 420.6 L558.1 433.6 L561.8 417.1 L565.7 413.0 L569.4 409.1 L576.7 391.4 L580.8 398.9 L584.1 400.0 L588.0 397.6 L591.6 386.4 L595.5 386.8 L599.2 389.6 L606.8 406.3 L610.7 406.3 L614.4 410.8 L618.3 414.5 L621.9 414.5 L625.8 419.3 L629.1 427.5 L633.2 421.5 L637.1 424.7 L640.8 423.8 L647.9 409.1 L651.8 429.7 L655.9 424.3 L658.7 425.8 L663.1 423.6 L667.4 423.2 L671.3 421.5 L675.0 417.8 L678.2 411.7 L682.1 407.4 L686.2 410.8 L689.7 401.5 L692.9 398.3 L697.1 405.9 L701.0 404.1 L704.8 408.7 L712.2 400.5 L716.5 400.5 L720.0 427.5 L723.0 416.0 L726.9 412.4 L730.8 403.1 L735.2 417.1 L738.4 419.9 L742.1 418.4 L750.1 432.5 L757.2 426.4 L764.0 426.4 L768.5 431.0 L771.9 431.4 L775.8 419.9 L780.1 427.1 L783.4 427.5 L787.1 430.8 L791.0 429.7 L795.1 413.0 L798.3 426.0 L805.9 436.8 L810.2 418.9 L814.1 410.2 L816.9 386.0 L820.6 394.6 L824.9 400.5 L829.3 400.5 L832.9 399.4 L836.8 399.8 L840.5 402.6 L844.4 412.4 L847.7 422.1 L850.9 430.8 L855.2 428.6 L858.9 425.8 L861.7 428.6 L865.4 419.3 L870.4 422.1 L873.6 421.0 L876.9 434.0 L881.2 429.7 L885.1 418.9 L889.2 405.9 L892.0 405.4 L895.7 415.2 L899.6 413.0 L903.9 405.2 L907.2 410.8 L911.1 399.8 L915.4 402.2 L919.1 405.9 L926.7 391.8 L931.0 384.2 L935.8 378.4 L940.7 376.0 L944.6 397.2 L951.0 397.0 L956.0 396.1 L960.2 402.6 L964.6 397.9 L968.3 392.4 L971.6 392.2 L979.4 379.2 L983.0 392.9 L985.8 389.6 L990.2 399.8 L993.4 401.1 L997.7 408.5 L1001.4 403.7 L1005.8 402.6 L1009.0 401.1 L1013.3 397.2 L1016.6 399.8 L1023.7 383.1 L1027.4 397.6 L1030.6 397.2 L1035.0 408.5 L1038.9 404.4 L1042.6 404.1 L1045.8 424.3 L1058.1 424.3 L1061.0 405.9 L1064.6 398.3 L1068.5 395.7 L1071.8 396.6 L1076.1 402.0 L1080.0 402.0 L1084.1 387.0" fill="none" stroke="#ffffff" stroke-width="1.12" stroke-linejoin="round"/>
<path d="M2 390.5 H1108" stroke="#ff0000" stroke-width="1.15"/>
<path d="M2 441.5 H1111.5" stroke="#00ee00" stroke-width="1.15"/>
<path d="M1109.6 28.3 L1115.8 19.5 H1163 V37.1 H1115.8 Z" fill="#ffb04f" stroke="#0a0d10" stroke-width="1.5" paint-order="stroke"/>
<text x="1117.6" y="33.5" font-size="14" fill="#101418" textLength="38.5" lengthAdjust="spacingAndGlyphs">0.9890</text>
<path d="M1109.6 64.6 L1115.8 55.8 H1163 V73.39999999999999 H1115.8 Z" fill="#3d9bff" stroke="#0a0d10" stroke-width="1.5" paint-order="stroke"/>
<text x="1117.6" y="69.8" font-size="14" fill="#101418" textLength="38.5" lengthAdjust="spacingAndGlyphs">0.9244</text>
<path d="M1109.6 95.6 L1115.8 86.8 H1163 V104.39999999999999 H1115.8 Z" fill="#ff8c47" stroke="#0a0d10" stroke-width="1.5" paint-order="stroke"/>
<text x="1117.6" y="100.8" font-size="14" fill="#101418" textLength="38.5" lengthAdjust="spacingAndGlyphs">0.8693</text>
<path d="M1109.6 156.5 L1115.8 147.7 H1163 V165.3 H1115.8 Z" fill="#ffffff" stroke="#0a0d10" stroke-width="1.5" paint-order="stroke"/>
<text x="1117.6" y="161.7" font-size="14" fill="#101418" textLength="38.5" lengthAdjust="spacingAndGlyphs">0.7595</text>
<path d="M1109.6 387.5 L1115.8 378.7 H1163 V396.3 H1115.8 Z" fill="#ffffff" stroke="#0a0d10" stroke-width="1.5" paint-order="stroke"/>
<text x="1117.6" y="392.7" font-size="14" fill="#101418" textLength="45" lengthAdjust="spacingAndGlyphs">77.0993</text>
<g>
<rect x="429" y="0" width="273" height="22" fill="#05080a" opacity="0.92"/>
<rect x="430" y="1" width="64" height="20" fill="#262e36" opacity="0.88"/>
<rect x="495" y="1" width="80.5" height="20" fill="#213b55" opacity="0.95"/>
<rect x="577" y="1" width="60.5" height="20" fill="#262e36" opacity="0.88"/>
<rect x="639" y="1" width="62" height="20" fill="#262e36" opacity="0.88"/>
<g fill="#d6d6d6" font-size="12.5">
<text x="457.3" y="14.9" textLength="31.7" lengthAdjust="spacingAndGlyphs">Track</text>
<text x="521.3" y="14.9" textLength="49.7" lengthAdjust="spacingAndGlyphs" fill="#f0f0f0">Annotate</text>
<text x="603.8" y="14.9" textLength="29" lengthAdjust="spacingAndGlyphs">News</text>
<text x="665.1" y="14.9" textLength="31.7" lengthAdjust="spacingAndGlyphs">Zoom</text>
</g>
<g stroke="#9a9da0" fill="none" stroke-width="1">
<circle cx="442.5" cy="10.5" r="3"/><path d="M442.5 5 V16 M437 10.5 H448"/>
<path d="M504 13.5 L510 7.5" stroke-width="2"/><path d="M507 14.5 H512"/>
<path d="M585 6.5 H594 M590 8.5 H594 M585 10.5 H594 M585 12.5 H594 M585 14.5 H594"/><rect x="585" y="6" width="4" height="3" fill="#9a9da0" stroke="none"/>
<circle cx="649.5" cy="9" r="3.2"/><path d="M652 11.5 L656.5 15.5" stroke-width="1.8"/>
</g>
</g>
<rect x="6.5" y="23.5" width="494" height="47" rx="3" ry="3" fill="#1b2025" fill-opacity="0.74" stroke="#020304" stroke-width="1"/>
<g stroke="#96968c" fill="none" stroke-width="1" shape-rendering="crispEdges"><rect x="13.5" y="35.5" width="6" height="6"/><path d="M15 38.5 H18"/><path d="M16.5 42 V63"/><path d="M16.5 55.5 H20"/></g>
<rect x="23" y="33" width="12" height="12" fill="#ffb85c"/>
<rect x="23" y="49" width="12" height="12" fill="#3b9dff"/>
<rect x="275" y="33" width="12" height="12" fill="#ff8c47"/>
<rect x="275" y="49" width="12" height="12" fill="#ffffff"/>
<g fill="#dcdcdc">
<text x="39.3" y="44.9" textLength="175.9" lengthAdjust="spacingAndGlyphs">.JN2/10 U Index - Last Price</text>
<text x="222.2" y="44.9" textLength="38.8" lengthAdjust="spacingAndGlyphs">0.9890</text>
<text x="39.3" y="60.9" textLength="148.8" lengthAdjust="spacingAndGlyphs">EMAVG (20) (.JN2/10 U)</text>
<text x="222.2" y="60.9" textLength="38.8" lengthAdjust="spacingAndGlyphs">0.9244</text>
<text x="291.2" y="44.9" textLength="149" lengthAdjust="spacingAndGlyphs">SMAVG (50) (.JN2/10 U)</text>
<text x="454.2" y="44.9" textLength="38.3" lengthAdjust="spacingAndGlyphs">0.8693</text>
<text x="291.2" y="60.9" textLength="156.1" lengthAdjust="spacingAndGlyphs">SMAVG (200) (.JN2/10 U)</text>
<text x="454.2" y="60.9" textLength="38.3" lengthAdjust="spacingAndGlyphs">0.7595</text>
</g>
<rect x="6" y="444.5" width="207.5" height="28" rx="3" ry="3" fill="#14191d" opacity="0.92"/>
<rect x="13.8" y="452.8" width="12" height="11.3" fill="#ffffff"/>
<text x="30.3" y="464" fill="#dcdcdc" textLength="176.4" lengthAdjust="spacingAndGlyphs">RSI (8) (.JN2/10 U) 77.0993</text>
<g fill="#e6e6e6" text-anchor="middle">
<text x="32.5" y="492" textLength="22.4" lengthAdjust="spacingAndGlyphs">Dec</text>
<text x="117" y="492" textLength="20.3" lengthAdjust="spacingAndGlyphs">Jan</text>
<text x="198" y="492" textLength="21.7" lengthAdjust="spacingAndGlyphs">Feb</text>
<text x="275" y="492" textLength="21.7" lengthAdjust="spacingAndGlyphs">Mar</text>
<text x="355.5" y="492" textLength="19.6" lengthAdjust="spacingAndGlyphs">Apr</text>
<text x="435.5" y="492" textLength="23.8" lengthAdjust="spacingAndGlyphs">May</text>
<text x="514.5" y="492" textLength="20.3" lengthAdjust="spacingAndGlyphs">Jun</text>
<text x="598" y="492" textLength="16.1" lengthAdjust="spacingAndGlyphs">Jul</text>
<text x="680.5" y="492" textLength="22.4" lengthAdjust="spacingAndGlyphs">Aug</text>
<text x="761" y="492" textLength="22.4" lengthAdjust="spacingAndGlyphs">Sep</text>
<text x="845.5" y="492" textLength="19.6" lengthAdjust="spacingAndGlyphs">Oct</text>
<text x="926.5" y="492" textLength="22.4" lengthAdjust="spacingAndGlyphs">Nov</text>
<text x="1007.5" y="492" textLength="22.4" lengthAdjust="spacingAndGlyphs">Dec</text>
<text x="1091.5" y="492" textLength="20.3" lengthAdjust="spacingAndGlyphs">Jan</text>
<text x="38.5" y="508" textLength="27.5" lengthAdjust="spacingAndGlyphs">2024</text>
<text x="562" y="508" textLength="27.5" lengthAdjust="spacingAndGlyphs">2025</text>
<text x="1079.5" y="508" textLength="27.5" lengthAdjust="spacingAndGlyphs">2026</text>
</g>
</svg>
</body></html>
